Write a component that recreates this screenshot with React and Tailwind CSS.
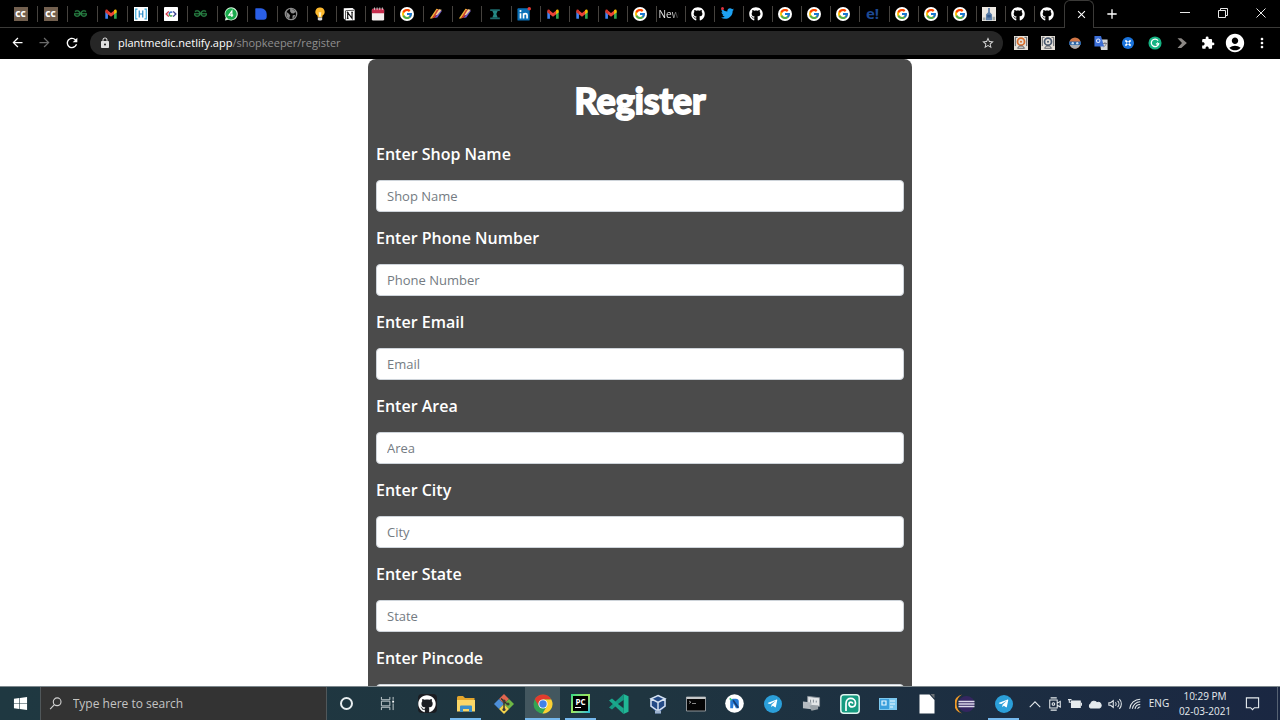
import React from 'react';
import { FaGithub, FaTwitter, FaTelegramPlane, FaWindows } from 'react-icons/fa';
import { FcGoogle } from 'react-icons/fc';
import { SiGeeksforgeeks } from 'react-icons/si';
import {
  MdArrowBack,
  MdArrowForward,
  MdRefresh,
  MdLock,
  MdStarBorder,
  MdExtension,
  MdAccountCircle,
  MdMoreVert,
  MdAdd,
  MdClose,
} from 'react-icons/md';

const Svg = ({ size = 14, box = 16, children }) => (
  <svg width={size} height={size} viewBox={`0 0 ${box} ${box}`} fill="none" aria-hidden="true">
    {children}
  </svg>
);

/* ---------- tab favicons ---------- */

const CodeChef = () => (
  <span className="flex size-[14px] items-center justify-center bg-[#73604f] text-[8px] leading-none font-black text-white">CC</span>
);
const Geeks = () => <SiGeeksforgeeks size={13} color="#2a8647" stroke="#2a8647" strokeWidth="0.4" />;
const Gmail = () => (
  <Svg>
    <path d="M1.500 13.500V4.500L4.500 6.500v7z" fill="#4285f4" />
    <path d="M14.500 13.500V4.500L11.500 6.500v7z" fill="#34a853" />
    <path d="M4.300 4 8 6.800 11.700 4v4.200L8 11 4.300 8.200z" fill="#ea4335" />
    <path d="M1.500 4.500C1.500 2.500 3.500 2.400 4.500 3.400v5L1.500 6.300z" fill="#d5362b" />
    <path d="M14.500 4.500c0-2-2-2.100-3-1.100v5l3-2.100z" fill="#fbbc04" />
  </Svg>
);
const Hacker = () => (
  <Svg>
    <rect width="16" height="16" fill="#fff" />
    <path d="M4 2.500H2v11h2M12 2.500h2v11h-2" stroke="#35a7d8" strokeWidth="1.300" />
    <path d="M6 4v8M10 4v8M6 8h4" stroke="#2c8ecb" strokeWidth="1.400" />
  </Svg>
);
const CodeEye = () => (
  <Svg>
    <rect width="16" height="16" rx="1" fill="#fff" />
    <path d="M5.500 5 2.500 8l3 3" stroke="#d13b4a" strokeWidth="1.600" />
    <path d="M10.500 5l3 3-3 3" stroke="#3b3f8e" strokeWidth="1.600" />
    <path d="M9.500 6.300C7.500 5 6 6.500 6 8" stroke="#3268c8" strokeWidth="1.600" />
    <path d="M6 8c0 2 2 3 3.500 1.700" stroke="#46a44c" strokeWidth="1.600" />
  </Svg>
);
const WhatsApp = () => (
  <Svg>
    <path d="M1 15.500 2 12A7.500 7.500 0 1 1 5 14.600z" fill="#d9f5df" />
    <circle cx="8" cy="8" r="6.500" fill="#19ab4b" />
    <path d="M9 11.500V4.500L5.500 9.300h5" stroke="#fff" strokeWidth="1.300" />
  </Svg>
);
const BlueD = () => (
  <Svg>
    <path d="M2 1.500h6a6.500 6.500 0 0 1 6.500 6.500v3a3.500 3.500 0 0 1-3.500 3.500H3.500a2 2 0 0 1-2-2V2z" fill="#2a5fe6" />
  </Svg>
);
const Globe = () => (
  <Svg>
    <circle cx="8" cy="8" r="6.500" stroke="#8c8c8c" strokeWidth="1.500" />
    <path d="M2.500 5.500 5 7l2 2.500L6 13 3 11zM7 2l3 .5 3.500 3-2.500 2-2.500-.5L7 5zM10 9.500l3-.5-1.500 3-2 1z" fill="#8c8c8c" />
  </Svg>
);
const Bulb = () => (
  <Svg>
    <path d="M8 .500a5 5 0 0 0-3 9.200l.5 2.300h5l.5-2.300A5 5 0 0 0 8 .500z" fill="#fdb92e" />
    <path d="M6.500 6h3L9 11H7z" fill="#fff3c4" />
    <path d="M5.500 12h5v2l-1 1.500h-3l-1-1.500z" fill="#d9d9d9" />
  </Svg>
);
const Notion = () => (
  <Svg>
    <path d="M2 1.500 12 1l2.500 2v12L4.500 15.500 2 13z" fill="#fff" />
    <path d="M4 4.200 14 3.700M4 4.500v10" stroke="#111" strokeWidth=".8" />
    <path d="M6.500 13V6.500l5 6.500V6M5.500 6.300h2M10.500 6h2M5.500 13h2" stroke="#111" strokeWidth="1.300" />
  </Svg>
);
const Calendar = () => (
  <Svg>
    <rect x="1" y="2" width="14" height="13.500" rx="1.500" fill="#f4eeee" />
    <path d="M1 7V3.500A1.500 1.500 0 0 1 2.500 2h11A1.500 1.500 0 0 1 15 3.500V7z" fill="#c52c4c" />
    <path d="M4 .500v3M7 .500v3M10 .500v3M13 .500v3" stroke="#ddd" strokeWidth=".9" />
  </Svg>
);
const Google = () => (
  <span className="flex size-[14px] items-center justify-center rounded-full bg-white">
    <FcGoogle size={12} />
  </span>
);
const Stripes = () => (
  <Svg>
    <path d="M1 13 8.500 2 11 2.500 3.500 13z" fill="#f0b13a" />
    <path d="M3.500 13 9 3.500 12 2.500 7 12z" fill="#cf3c2e" />
    <path d="M6.500 12.500 12 4.500 15 4 9.500 12z" fill="#6d55c3" />
    <path d="m7.500 9 4-6.500 3 .5L9 9.500z" fill="#f5d49a" />
  </Svg>
);
const Teal = () => (
  <Svg>
    <path d="M2.500 3.500h11M2.500 13h11" stroke="#1d6a6b" strokeWidth="2" />
    <path d="M5 4.500h6L9.500 8l1.500 4H5l1.500-4z" fill="#258a85" />
  </Svg>
);
const LinkedIn = () => (
  <Svg>
    <rect x=".5" y="1.500" width="14" height="14" rx="1" fill="#0a70b8" />
    <path d="M4 7v6M7.500 7v6M7.500 13V9.500c0-2.500 4-2.500 4 0V13" stroke="#fff" strokeWidth="1.900" />
    <circle cx="4" cy="4.700" r="1.200" fill="#fff" />
    <circle cx="14" cy="2" r="2" fill="#e33a34" />
  </Svg>
);
const GitHubTab = () => <FaGithub size={14} color="#fff" />;
const Twitter = () => (
  <span className="relative flex">
    <FaTwitter size={13} color="#1da1f2" />
    <span className="absolute top-0 left-0 size-[3px] rounded-full bg-[#e0303c]" />
  </span>
);
const Exclaim = () => <span className="text-[15px] leading-none font-bold text-[#1d4a94]">e!</span>;
const Tower = () => (
  <Svg>
    <rect x="0" y="0" width="16" height="16" fill="#ece8e2" />
    <path d="M7 1h2v5l2.500 2.500V15h-7V8.500L7 6z" fill="#5d7fa8" />
    <path d="M1 12h3v3H1zM12 11h3v4h-3z" fill="#a3a9a8" />
    <path d="M6 9h4v3H6z" fill="#335a8c" />
  </Svg>
);
const NewText = () => (
  <span className="text-[10px] leading-4 whitespace-nowrap text-[#e6e6e6] [mask-image:linear-gradient(to_right,black_65%,transparent)]">
    New
  </span>
);

const tabs = [
  [CodeChef, 'CodeChef'], [CodeChef, 'CodeChef'], [Geeks, 'GeeksforGeeks'], [Gmail, 'Gmail'], [Hacker, 'Contest'],
  [CodeEye, 'Code'], [Geeks, 'GeeksforGeeks'], [WhatsApp, 'WhatsApp'], [BlueD, 'Docs'], [Globe, 'Website'],
  [Bulb, 'Ideas'], [Notion, 'Notion'], [Calendar, 'Calendar'], [Google, 'Google'], [Stripes, 'Design'],
  [Stripes, 'Design'], [Teal, 'Project'], [LinkedIn, 'LinkedIn'], [Gmail, 'Gmail'], [Gmail, 'Gmail'],
  [Gmail, 'Gmail'], [Google, 'Google'], [NewText, 'New Tab'], [GitHubTab, 'GitHub'], [Twitter, 'Twitter'],
  [GitHubTab, 'GitHub'], [Google, 'Google'], [Google, 'Google'], [Google, 'Google'], [Exclaim, 'Edureka'],
  [Google, 'Google'], [Google, 'Google'], [Google, 'Google'], [Tower, 'Travel'], [GitHubTab, 'GitHub'], [GitHubTab, 'GitHub'],
];

function TabStrip() {
  return (
    <div className="flex h-7 shrink-0">
      <div className="flex min-w-0 flex-1 items-center border-b border-[#3b3a38] pl-2">
        {tabs.map(([Icon, name], i) => (
          <button
            key={i}
            aria-label={name}
            className={`flex h-4 min-w-0 items-center justify-center border-r border-[#45423e] pr-1 last:border-transparent ${
              i < 10 ? 'w-[30px]' : 'flex-1'
            }`}
          >
            <Icon />
          </button>
        ))}
      </div>
      <button aria-label="Close tab" className="flex w-[30px] items-center justify-center rounded-t-md border-x border-t border-[#3b3a38] pb-px pl-1 text-white">
        <MdClose size={13} />
      </button>
      <div className="flex w-[186px] items-center border-b border-[#3b3a38] text-[#e8e8e8]">
        <button aria-label="New tab" className="flex w-9 items-center justify-center text-white">
          <MdAdd size={16} />
        </button>
        <div className="ml-auto flex h-6 pb-[2px]">
          <button aria-label="Minimize" className="flex w-[38px] items-center justify-center">
            <Svg size={10} box={10}><path d="M0 4.500h10" stroke="currentColor" /></Svg>
          </button>
          <button aria-label="Restore" className="flex w-[38px] items-center justify-center">
            <Svg size={10} box={10}>
              <path d="M.5 2.500h7v7h-7zM2.500 2.500v-2h7v7h-2" stroke="currentColor" />
            </Svg>
          </button>
          <button aria-label="Close" className="flex w-[38px] items-center justify-center">
            <Svg size={10} box={10}><path d="m.5.5 9 9m0-9-9 9" stroke="currentColor" /></Svg>
          </button>
        </div>
      </div>
    </div>
  );
}

/* ---------- extension icons ---------- */

const Stamp = ({ color }) => (
  <Svg>
    <path d="M0 0h16v16H0z" fill="#e7e2da" />
    <circle cx="8" cy="6.500" r="4" stroke={color} strokeWidth="2" />
    <circle cx="8" cy="6.500" r="1.200" fill={color} />
    <path d="M1.500 1.500h2.500M1.500 1.500v10M14.500 1.500H12M14.500 1.500v10M4 14l2-2.500h4l2 2.500z" stroke="#4b5058" strokeWidth="1" />
  </Svg>
);

const extensions = [
  ['Screenshot', <Stamp color="#d9702f" />],
  ['Capture', <Stamp color="#4b5a70" />],
  ['Profile', (
    <Svg size={12}>
      <circle cx="8" cy="8" r="7.500" fill="#d27646" />
      <path d="M1 8h14c0 4-2 7-7 7.500C3 15 1 12 1 8z" fill="#a9aeb4" />
      <path d="M0 6h16v4.500H0z" fill="#2c65a6" />
      <circle cx="5" cy="8.200" r="1.600" fill="#c9dcf0" /><circle cx="11" cy="8.200" r="1.600" fill="#c9dcf0" />
    </Svg>
  )],
  ['Translate', (
    <Svg>
      <path d="M6 4h9.500v12H8z" fill="#d4d6da" />
      <path d="M.500 0H8l3.500 12H.500z" fill="#3c6fd8" />
      <circle cx="4.800" cy="5.500" r="2" stroke="#dfe9ff" strokeWidth="1.200" />
      <path d="M10 8.500h5M12.500 7v1.500m1.500 0c-.5 2-2 3.500-3 4" stroke="#667" strokeWidth=".9" />
    </Svg>
  )],
  ['Blocker', (
    <Svg size={12}>
      <circle cx="8" cy="8" r="8" fill="#1a73dc" />
      <path d="m4.500 4.500 7 7m0-7-7 7" stroke="#fff" strokeWidth="2.200" />
      <circle cx="8" cy="8" r="1.500" fill="#1a73dc" />
    </Svg>
  )],
  ['Grammarly', (
    <Svg>
      <circle cx="8" cy="8" r="7.500" fill="#15b383" />
      <path d="M11.500 5.200A4.300 4.300 0 1 0 12.200 9H9" stroke="#fff" strokeWidth="1.500" />
      <path d="m10.500 7.200 2 1.800-2 1.500" stroke="#fff" />
    </Svg>
  )],
  ['Next', (
    <Svg size={12}>
      <path d="M2 1.500h5L14.500 8 7 14.500H2L8 8z" fill="#8c8885" />
    </Svg>
  )],
  ['Extensions', <MdExtension size={14} />],
  ['Account', <MdAccountCircle size={22} />],
  ['Menu', <MdMoreVert size={16} />],
];

function Toolbar() {
  return (
    <div className="flex h-[31px] shrink-0 items-center pb-px text-white">
      <nav className="flex w-[90px] pr-[5px] pl-1">
        <button aria-label="Back" className="flex flex-1 justify-center"><MdArrowBack size={15} /></button>
        <button aria-label="Forward" className="flex flex-1 justify-center text-[#6a6a6a]"><MdArrowForward size={15} /></button>
        <button aria-label="Reload" className="flex flex-1 justify-center"><MdRefresh size={16} /></button>
      </nav>
      <div className="flex h-6 min-w-0 flex-1 items-center rounded-full bg-[#262626] pr-2 pl-[9px]">
        <MdLock size={12} color="#e0e0e0" />
        <div role="textbox" aria-label="Address" className="ml-[7px] flex-1 truncate text-[11px] text-[#8f8f8f]">
          <span className="text-white">plantmedic.netlify.app</span>/shopkeeper/register
        </div>
        <button aria-label="Bookmark"><MdStarBorder size={14} color="#d8d8d8" /></button>
      </div>
      <div className="mr-[5px] ml-[5px] flex w-[267px] items-center">
        {extensions.map(([name, icon]) => (
          <button key={name} aria-label={name} className="flex flex-1 items-center justify-center">{icon}</button>
        ))}
      </div>
    </div>
  );
}

/* ---------- page ---------- */

const fields = ['Shop Name', 'Phone Number', 'Email', 'Area', 'City', 'State', 'Pincode'];

function RegisterForm() {
  return (
    <form className="w-[42.5%] rounded-lg bg-[#4b4b4b] px-2 pb-6">
      <h1 className="pt-5 text-center font-[Lato] text-[36px] leading-[42px] font-bold text-white [-webkit-text-stroke:2px_white] [stroke-linejoin:round]">
        Register
      </h1>
      <div className="pt-[19px]">
        {fields.map((name) => {
          const id = name.toLowerCase().replace(' ', '-');
          return (
            <div key={name} className="mb-3">
              <label htmlFor={id} className="block h-10 text-[16px] leading-[28px] font-semibold text-white">
                Enter {name}
              </label>
              <input
                id={id}
                placeholder={name}
                className="block h-8 w-full rounded border border-[#ced4da] bg-white px-[10px] text-[13px] text-[#495057] placeholder:text-[#747b82]"
              />
            </div>
          );
        })}
      </div>
    </form>
  );
}

/* ---------- taskbar ---------- */

const Telegram = () => (
  <span className="flex size-[18px] items-center justify-center rounded-full bg-[#2b9fd9] pr-px">
    <FaTelegramPlane size={11} color="#fff" />
  </span>
);

const apps = [
  ['GitHub Desktop', (
    <span className="flex size-[19px] items-center justify-center rounded bg-[#1b1d22]"><FaGithub size={18} color="#fff" /></span>
  )],
  ['File Explorer', (
    <Svg size={20} box={20}>
      <path d="M1 3.500A1.500 1.500 0 0 1 2.500 2H7l2 2h9.500v13H1z" fill="#e3a52c" />
      <path d="M1 6h18v11.500H1z" fill="#fbd768" />
      <path d="M4 18v-5.500a1 1 0 0 1 1-1h10a1 1 0 0 1 1 1V18h-3v-3H7v3z" fill="#3b8fca" />
    </Svg>
  ), 'open'],
  ['Git', (
    <Svg size={20} box={20}>
      <path d="m10 0 5 5-5 5-5-5z" fill="#e2664f" />
      <path d="m5 5 5 5-5 5-5-5z" fill="#4d8fd8" />
      <path d="m15 5 5 5-5 5-5-5z" fill="#6eb745" />
      <path d="m10 10 5 5-5 5-5-5z" fill="#f4d44c" />
      <path d="M7 4.500 13 10M10 7v9" stroke="#34332f" strokeWidth="1.400" />
      <circle cx="10" cy="7" r="1.600" fill="#3c3b37" /><circle cx="14" cy="10" r="1.600" fill="#3c3b37" /><circle cx="10" cy="15.500" r="1.600" fill="#3c3b37" />
    </Svg>
  )],
  ['Chrome', (
    <Svg size={20} box={20}>
      <circle cx="10" cy="10" r="9.500" fill="#34a552" />
      <path d="M1.800 5.200A9.500 9.500 0 0 1 18.300 5.500H10L6 12.500z" fill="#e33b2e" />
      <path d="M10 5.500h8.300A9.500 9.500 0 0 1 9.500 19.500L14 12z" fill="#fccf34" />
      <circle cx="10" cy="10" r="4.600" fill="#fff" /><circle cx="10" cy="10" r="3.700" fill="#4081e8" />
    </Svg>
  ), 'active'],
  ['PyCharm', (
    <span className="flex size-[19px] items-center justify-center bg-linear-to-br from-[#22d585] via-[#9fe85a] to-[#10b7d8]">
      <span className="flex size-[15px] flex-col items-start bg-black pt-px pl-[2px] text-[8px] leading-[9px] font-bold text-white">
        PC
        <span className="mt-px h-px w-[6px] bg-white" />
      </span>
    </span>
  ), 'open'],
  ['Visual Studio Code', (
    <Svg size={20} box={20}>
      <path d="m14.500 0 5 2.200v15.600l-5 2.200z" fill="#20b795" />
      <path d="M14.500 5.500v9L8.500 10zM14.500 0v5.500L3 15.500 0 13.500z" fill="#159a83" />
      <path d="M14.500 20v-5.500L3 4.500 0 6.500z" fill="#1aa88c" />
      <path d="M14.500 6v8L9 10z" fill="#1d333f" />
    </Svg>
  )],
  ['VirtualBox', (
    <Svg size={20} box={20}>
      <path d="m10 1 8 3.500v8L13 17v2.500H7V17l-5-4.500v-8z" fill="#244a86" />
      <path d="m10 1.500 7 3.200-7 3.800-7-3.800zM3 5v7l7 5 7-5V5M10 8.500V17" stroke="#d5e1f0" strokeWidth="1.500" />
      <path d="M7 16.500h6v3H7z" fill="#9db2cd" />
    </Svg>
  )],
  ['Command Prompt', (
    <Svg size={20} box={20}>
      <path d="M.5 3h19v14H.5z" fill="#050505" stroke="#8f9498" />
      <path d="M.5 3h19v2H.5z" fill="#c4c7c9" />
      <path d="m3 7 2 1.200L3 9.500M6 9.500h4" stroke="#aaa" strokeWidth=".8" />
    </Svg>
  )],
  ['Android Studio', (
    <Svg size={19} box={20}>
      <circle cx="10" cy="10" r="9.800" fill="#fff" />
      <path d="M5.500 15V8a3 3 0 0 1 3-3h3a3 3 0 0 1 3 3v7h-3L9 10l-.5 5z" fill="#2478d6" />
      <path d="M8.500 6.500 14 14.500" stroke="#173d72" strokeWidth="1.800" />
      <path d="m5 4.500 2 2" stroke="#3ac97b" strokeWidth="1.800" />
    </Svg>
  )],
  ['Telegram', <Telegram />],
  ['Device', (
    <Svg size={19} box={20}>
      <path d="M6 2.500 18.500 4v9L6 12z" fill="#e3e6e8" stroke="#8b949b" />
      <path d="m1 8 9 1v7l-9-1z" fill="#b4bbc0" />
      <path d="M8 12h9v4l-7 1.500z" fill="#9aa2a8" />
      <path d="M9 6v3m3-3v3m3-2v2" stroke="#7d8890" />
    </Svg>
  )],
  ['Photopea', (
    <Svg size={20} box={20}>
      <rect x=".8" y=".8" width="18.400" height="18.400" rx="3" fill="#169b80" stroke="#dff5ef" strokeWidth="1.500" />
      <path d="M6 17V9.500C6 2.500 15.500 3 15.500 9c0 5-6.500 5-6.500 1 0-2.500 3.500-2.500 3.500-.3" stroke="#fff" strokeWidth="1.700" />
    </Svg>
  )],
  ['Control Panel', (
    <Svg size={18} box={18}>
      <path d="M0 3h18v12H0z" fill="#7cc8ef" />
      <path d="M1 4h9v10H1z" fill="#3b9fdc" />
      <path d="M3 6h4v4H3zM11 6h5M11 9h5M11 12h3" stroke="#e9f8ff" strokeWidth="1.200" />
    </Svg>
  )],
  ['LibreOffice', (
    <Svg size={20} box={20}>
      <path d="M2.500.5h10l5 5.500v13.500h-15z" fill="#fff" />
      <path d="M13.500 0h4v4.500z" fill="#6d7277" />
    </Svg>
  )],
  ['Eclipse', (
    <Svg size={20} box={20}>
      <path d="M7 .500a9.700 9.700 0 0 0 0 19 11 11 0 0 1 0-19z" fill="#f09a28" />
      <circle cx="11.500" cy="10" r="8" fill="#342660" />
      <path d="M3.500 7.500h16M3.500 10h16M3.500 12.500h16" stroke="#dcd9ea" strokeWidth="1.500" />
    </Svg>
  )],
  ['Telegram Desktop', <Telegram />, 'open'],
];

const tray = [
  ['Show hidden icons', <path d="m2 11.500 6-6 6 6" />],
  ['Meet Now', <><path d="M2 3.500h8.500v9H2zM10.500 7 14 5v6.500L10.500 9.500M3 1h7M3 15h7" /><circle cx="6.200" cy="8" r="1.500" /></>],
  ['Battery', <><path d="M4 4.500h10v7.500H4z" fill="currentColor" /><path d="M15.500 6.500v3.500M0 3h4M1.500 3v3h3" /></>],
  ['OneDrive', <path d="M3 12.500a2.500 2.500 0 0 1 0-4.500 4 4 0 0 1 7.200-1.500A3 3 0 0 1 13 12.500z" fill="currentColor" />],
  ['Volume', <><path d="M1 6.500h2L6 4v8L3 9.500H1zM8.500 6c1 1 1 3 0 4M11 4.500c2 2 2 5 0 7M13 2.500c3 3 3 8 0 11" /></>],
  ['Network', <><path d="M2 13.500A12 12 0 0 1 14 2.500M5 13.500a9 9 0 0 1 9-8M8 13.500a6 6 0 0 1 6-5M11 13.500a3 3 0 0 1 3-2" /></>],
];

function Taskbar() {
  return (
    <footer className="flex h-[34px] shrink-0 border-t border-[#7d888d] bg-linear-to-r from-[#1f3841] via-[#1f3540] to-[#1a2742] text-[#e6ebee]">
      <button aria-label="Start" className="flex w-10 items-center justify-center"><FaWindows size={15} color="#fff" /></button>
      <label className="flex w-[287px] items-center border-x border-[#50575a] bg-[#333333] pl-2">
        <Svg size={15}>
          <circle cx="9.500" cy="6" r="4.500" stroke="#d2d2d2" strokeWidth="1.300" />
          <path d="m6.300 9.300-5 5.200" stroke="#d2d2d2" strokeWidth="1.300" />
        </Svg>
        <input aria-label="Search" placeholder="Type here to search" className="ml-[10px] w-full min-w-0 bg-transparent text-[12px] outline-none placeholder:text-[#c4c4c4]" />
      </label>
      <button aria-label="Cortana" className="flex w-[39px] items-center justify-center">
        <span className="size-[13px] rounded-full border-2 border-[#e8eef0]" />
      </button>
      <button aria-label="Task view" className="flex w-[42px] items-center justify-center">
        <Svg size={15}>
          <path d="M1.500 1v3h9V1M1.500 15v-3h9v3M1.500 5.500h9v5h-9zM14 1v3M14 8v7" stroke="#c9d1d4" />
          <path d="M13 5h2v2h-2z" fill="#fff" />
        </Svg>
      </button>
      <div className="flex min-w-0 flex-1">
        {apps.map(([name, icon, state = 'idle']) => (
          <button key={name} aria-label={name} className="relative flex min-w-0 flex-1 items-center justify-center">
            {state === 'active' && <span className="absolute inset-y-0 w-[35px] bg-[#43575f]" />}
            <span className="relative flex">{icon}</span>
            {state !== 'idle' && (
              <span className={`absolute bottom-0 h-[2px] bg-[#76b9ed] ${state === 'active' ? 'w-[35px]' : 'w-[31px]'}`} />
            )}
          </button>
        ))}
      </div>
      <div className="flex w-[257px] items-center pl-[2px] text-[10px]">
        {tray.map(([name, shape]) => (
          <button key={name} aria-label={name} className="flex w-5 items-center justify-center">
            <svg width="14" height="14" viewBox="0 0 16 16" fill="none" stroke="currentColor" strokeWidth="1.200">{shape}</svg>
          </button>
        ))}
        <button className="w-7 text-center">ENG</button>
        <button className="flex w-16 flex-col items-center leading-[15px] whitespace-nowrap">
          <span>10:29 PM</span>
          <span>02-03-2021</span>
        </button>
        <button aria-label="Notifications" className="flex w-[30px] items-center justify-center">
          <Svg size={15}>
            <path d="M1.500 2h13v10.500H10L8 14.500l-2-2H1.500z" stroke="currentColor" strokeWidth="1.200" />
          </Svg>
        </button>
        <span className="mr-[2px] ml-auto h-full w-px bg-[#566273]" />
      </div>
    </footer>
  );
}

export default function App() {
  return (
    <div className="flex h-screen flex-col bg-black font-['Open_Sans','Noto_Sans',sans-serif]">
      <header className="shrink-0">
        <TabStrip />
        <Toolbar />
      </header>
      <main className="flex min-h-0 flex-1 items-start justify-center overflow-hidden bg-white">
        <RegisterForm />
      </main>
      <Taskbar />
    </div>
  );
}
